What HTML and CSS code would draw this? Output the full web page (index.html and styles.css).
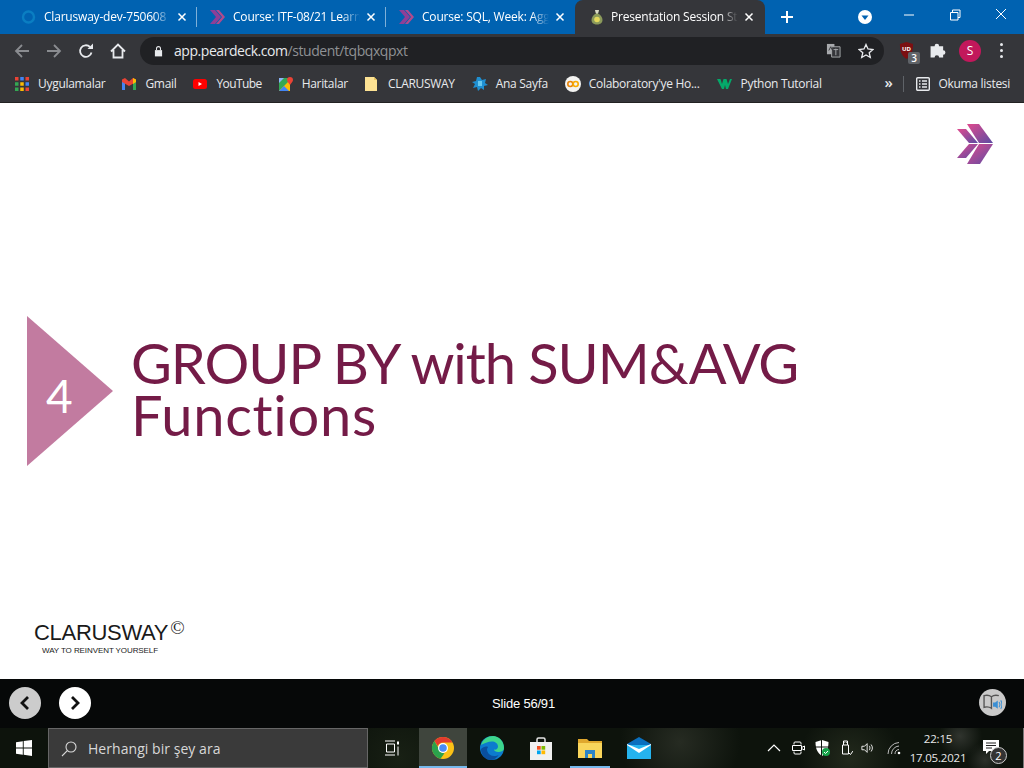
FILE: index.html
```html
<!DOCTYPE html>
<html lang="tr">
<head>
<meta charset="utf-8">
<title>Presentation Session Student</title>
<link rel="stylesheet" href="styles.css">
</head>
<body>
<div class="screen">
  <header class="tabstrip">
    <div class="tab">
      <svg class="fav" viewBox="0 0 16 16"><circle cx="7.500" cy="8" r="5.500" fill="none" stroke="#0a7ec2" stroke-width="2.400"/></svg>
      <span class="tab-title">Clarusway-dev-750608</span>
      <svg class="tab-x" viewBox="0 0 10 10"><path d="M1.500 1.500l7 7M8.500 1.500l-7 7"/></svg>
    </div>
    <i class="tab-sep"></i>
    <div class="tab">
      <svg class="fav" viewBox="0 0 16 16"><path d="M0 1h5l6 7-6 7H0l6-7z" fill="#8e3f97"/><path d="M6 1h3l6 7-6 7H6l6-7z" fill="#b04a8c"/></svg>
      <span class="tab-title">Course: ITF-08/21 Learn</span>
      <svg class="tab-x" viewBox="0 0 10 10"><path d="M1.500 1.500l7 7M8.500 1.500l-7 7"/></svg>
    </div>
    <i class="tab-sep"></i>
    <div class="tab">
      <svg class="fav" viewBox="0 0 16 16"><path d="M0 1h5l6 7-6 7H0l6-7z" fill="#8e3f97"/><path d="M6 1h3l6 7-6 7H6l6-7z" fill="#b04a8c"/></svg>
      <span class="tab-title">Course: SQL, Week: Agg</span>
      <svg class="tab-x" viewBox="0 0 10 10"><path d="M1.500 1.500l7 7M8.500 1.500l-7 7"/></svg>
    </div>
    <div class="tab tab-active">
      <svg class="fav" viewBox="0 0 16 16"><path d="M6 1h4L9 4.500c3 1.500 4.500 4 4.500 6.500 0 3-2.500 4.500-5.500 4.500S2.500 14 2.500 11C2.500 8.500 4 6 7 4.500z" fill="#8b9a5b"/><circle cx="8" cy="10.500" r="2.800" fill="#e3d95c"/><path d="M6 1h4L9 4.500H7z" fill="#d8d8c8"/></svg>
      <span class="tab-title">Presentation Session Stu</span>
      <svg class="tab-x" viewBox="0 0 10 10"><path d="M1.500 1.500l7 7M8.500 1.500l-7 7"/></svg>
    </div>
    <svg class="newtab" viewBox="0 0 12 12"><path d="M6 0v12M0 6h12"/></svg>
    <div class="strip-spacer"></div>
    <svg class="profile-drop" viewBox="0 0 14 14"><circle cx="7" cy="7" r="7" fill="#fff"/><path d="M3.500 5.500h7L7 10z" fill="#0062b1"/></svg>
    <div class="winctl">
      <svg viewBox="0 0 46 30"><path d="M18 15h10"/></svg>
      <svg viewBox="0 0 46 30"><path d="M18.500 12.500h7.500v7.500h-7.500zM20.500 12.500v-2.500h7.500v7.500h-2"/></svg>
      <svg viewBox="0 0 46 30"><path d="M18 9l10 10M28 9l-10 10"/></svg>
    </div>
  </header>

  <nav class="toolbar">
    <svg class="tool dim" viewBox="0 0 16 16"><path d="M15 8H2M8 2L2 8l6 6"/></svg>
    <svg class="tool dim" viewBox="0 0 16 16"><path d="M1 8h13M8 2l6 6-6 6"/></svg>
    <svg class="tool" viewBox="0 0 16 16"><path d="M13.500 9.500A5.800 5.800 0 1 1 12 4"/><path class="solid" d="M9.500 6H15V.5z"/></svg>
    <svg class="tool" viewBox="0 0 16 16"><path d="M1 8.500L8 1.500l7 7M3.500 7v7.500h9V7"/></svg>
    <div class="omnibox">
      <svg class="lock" viewBox="0 0 10 12"><path d="M1 5h8v7H1z" fill="#e8eaed"/><path d="M2.800 5V3.300a2.200 2.200 0 0 1 4.400 0V5" fill="none" stroke="#e8eaed" stroke-width="1.200"/></svg>
      <span class="url"><b>app.peardeck.com</b>/student/tqbqxqpxt</span>
      <div class="omni-spacer"></div>
      <svg class="translate" viewBox="0 0 16 16"><path d="M1 1h8v11H1z" fill="#a8aaad"/><path d="M6 4h9v11H6z" fill="#35363a" stroke="#a8aaad"/><path d="M3 8l2-4 2 4" stroke="#35363a" fill="none"/><path d="M8 7h5M10.500 6v7" stroke="#a8aaad"/></svg>
      <svg class="star" viewBox="0 0 16 16"><path d="M8 1.500l2 4.500 4.900.5-3.700 3.200 1.100 4.800L8 12l-4.300 2.500 1.100-4.800L1.100 6.500 6 6z"/></svg>
    </div>
    <div class="ublock">
      <svg viewBox="0 0 16 18"><path d="M8 0l7 2c0 8-2 13-7 16C3 15 1 10 1 2z" fill="#7b0f12"/></svg>
      <span class="ub-text">UD</span>
      <span class="ub-badge">3</span>
    </div>
    <svg class="puzzle" viewBox="0.500 2.500 14 13.500"><path d="M1 5h3.500a2 2 0 1 1 4 0H12v3.500a2 2 0 1 1 0 4V15H8.500a2 2 0 1 0-4 0H1z" fill="#e8eaed"/></svg>
    <span class="avatar">S</span>
    <span class="kebab"><i></i><i></i><i></i></span>
  </nav>

  <nav class="bookmarks">
    <span class="bm">
      <svg class="bm-ic" viewBox="0 0 12 12"><g><rect width="3" height="3" fill="#ea4335"/><rect x="4.500" width="3" height="3" fill="#4285f4"/><rect x="9" width="3" height="3" fill="#ea4335"/><rect y="4.500" width="3" height="3" fill="#34a853"/><rect x="4.500" y="4.500" width="3" height="3" fill="#fbbc04"/><rect x="9" y="4.500" width="3" height="3" fill="#4285f4"/><rect y="9" width="3" height="3" fill="#34a853"/><rect x="4.500" y="9" width="3" height="3" fill="#fbbc04"/><rect x="9" y="9" width="3" height="3" fill="#ea4335"/></g></svg>
      Uygulamalar</span>
    <span class="bm">
      <svg class="bm-ic" viewBox="0 0 14 12"><path d="M0 2v10h3V5z" fill="#4285f4"/><path d="M14 2v10h-3V5z" fill="#34a853"/><path d="M0 1.500L3 0l4 3.500L11 0l3 1.500V4L7 8 0 4z" fill="#ea4335"/><path d="M11 0l3 1.500V4l-3 2z" fill="#fbbc04"/></svg>
      Gmail</span>
    <span class="bm bm-tight">
      <svg class="bm-ic" viewBox="0 0 14 10"><rect width="14" height="10" rx="2.500" fill="#f00"/><path d="M5.500 3v4L9 5z" fill="#fff"/></svg>
      YouTube</span>
    <span class="bm">
      <svg class="bm-ic" viewBox="0 0 14 14"><path d="M0 1h11v13H0z" fill="#34a853"/><path d="M0 14L11 3v11z" fill="#fbbc04"/><path d="M0 14l5-5 5 5z" fill="#4285f4"/><path d="M0 1h5L0 6z" fill="#8ab4f8"/><path d="M11 0a3 3 0 0 1 3 3c0 2-2 3-3 5-1-2-3-3-3-5a3 3 0 0 1 3-3z" fill="#ea4335"/></svg>
      Haritalar</span>
    <span class="bm">
      <svg class="bm-ic" viewBox="0 0 14 14"><path d="M0 0h9l3 3v11H0z" fill="#fde293"/><path d="M9 0l3 3H9z" fill="#e8c55f"/></svg>
      CLARUSWAY</span>
    <span class="bm">
      <svg class="bm-ic bm-ic-wide" viewBox="0 0 16 14"><path d="M8 0l2 3 4-1-1 4 3 2-4 1 0 4-3-2-3 3-1-4-4 1 2-4L0 5l4-1 1-4z" fill="#1f8fd1"/><path d="M6 4h4v5H6z" fill="#67c7ee"/></svg>
      Ana Sayfa</span>
    <span class="bm">
      <svg class="bm-ic bm-ic-wide" viewBox="0 0 16 16"><circle cx="8" cy="8" r="8" fill="#f3f3f1"/><circle cx="5.300" cy="8" r="2.500" fill="none" stroke="#e8860c" stroke-width="1.600"/><circle cx="10.700" cy="8" r="2.500" fill="none" stroke="#f9ab00" stroke-width="1.600"/></svg>
      Colaboratory'ye Ho...</span>
    <span class="bm">
      <svg class="bm-ic bm-ic-wide" viewBox="0 0 16 12"><path d="M0 1h3.500L5 6l1.500-5h3L11 6l2-5h2l-4 10H9L8 7l-1 4H5z" fill="#04a96a"/></svg>
      Python Tutorial</span>
    <div class="bm-spacer"></div>
    <span class="chev">»</span>
    <i class="bm-sep"></i>
    <span class="bm bm-last">
      <svg class="bm-ic" viewBox="0 0 14 14"><rect x=".7" y=".7" width="12.600" height="12.600" rx="1" fill="none" stroke="#e8eaed" stroke-width="1.400"/><path d="M3 4h1.500M6 4h5M3 7h1.500M6 7h5M3 10h1.500M6 10h5" stroke="#e8eaed" stroke-width="1.300"/></svg>
      Okuma listesi</span>
  </nav>

  <main class="slide">
    <svg class="slide-logo" viewBox="0 0 36 40">
      <defs><linearGradient id="lg" x1="0" y1="0" x2="1" y2="1"><stop offset="0" stop-color="#df4a8e"/><stop offset="1" stop-color="#5c4ba3"/></linearGradient></defs>
      <path d="M0 5h9l12 14h-9z" fill="url(#lg)"/><path d="M12 20h9L9 34H0z" fill="url(#lg)"/>
      <path d="M10 0h12l14 19H22z" fill="url(#lg)"/><path d="M22 20h14L23 40H10z" fill="url(#lg)"/>
    </svg>
    <div class="section-marker"><span>4</span></div>
    <h1 class="slide-title"><span class="line-one">GROUP BY with SUM&amp;AVG</span><span class="line-two">Functions</span></h1>
    <div class="brand">
      <div class="brand-name">CLARUSWAY<sup>©</sup></div>
      <div class="brand-tag">WAY TO REINVENT YOURSELF</div>
    </div>
  </main>

  <footer class="deckbar">
    <button class="nav-btn nav-off"><svg viewBox="0 0 12 16"><path d="M9 2L3 8l6 6"/></svg></button>
    <button class="nav-btn"><svg viewBox="0 0 12 16"><path d="M3 2l6 6-6 6"/></svg></button>
    <span class="slide-count">Slide 56/91</span>
    <span class="reader">
      <svg viewBox="0 0 18 18"><path d="M1 2.500c3-.8 5-.5 7 1v11c-2-1.500-4-1.800-7-1zM15 2.500c-3-.8-5-.5-7 1v11" fill="none" stroke="#555" stroke-width="1.300"/><path d="M9.500 9h2l2.500-2v8l-2.500-2h-2z" fill="#3b8fd4"/><path d="M15.200 8.500c1 1.500 1 3.500 0 5M16.800 7c1.500 2 1.500 6 0 8" fill="none" stroke="#3b8fd4"/></svg>
    </span>
  </footer>

  <footer class="taskbar">
    <svg class="start" viewBox="0 0 16 16"><path d="M0 2.200l6.800-1v6.300H0zM7.700 1L16 0v7.500H7.700zM0 8.500h6.800v6.300l-6.800-1zM7.700 8.500H16V16l-8.300-1.200z"/></svg>
    <div class="search">
      <svg viewBox="0 0 16 16"><circle cx="10" cy="6" r="5" fill="none" stroke="#d8d8d8" stroke-width="1.100"/><path d="M6.300 9.700L1 15" stroke="#d8d8d8" stroke-width="1.100"/></svg>
      <span>Herhangi bir şey ara</span>
    </div>
    <div class="task-view">
      <svg viewBox="0 0 16 16"><path d="M1 1h10M1 15h10M2.500 4h8v8h-8z" stroke="#fff" fill="none"/><path d="M14 1.500v3" stroke="#fff" stroke-width="2"/><path d="M14 6.500v9" stroke="#fff"/></svg>
    </div>
    <div class="task-item task-active">
      <svg viewBox="0 0 24 24"><circle cx="12" cy="12" r="11" fill="#fbc116"/><path d="M12 1a11 11 0 0 1 9.500 5.500H12a5.500 5.500 0 0 0-5.200 3.700L3.400 5A11 11 0 0 1 12 1z" fill="#e33b2e"/><path d="M3.400 5l4.800 8.300A5.500 5.500 0 0 0 13.500 17.300L9.500 22.700A11 11 0 0 1 3.400 5z" fill="#2ba24c"/><circle cx="12" cy="12" r="5" fill="#fff"/><circle cx="12" cy="12" r="3.800" fill="#4a8bf5"/></svg>
    </div>
    <div class="task-item">
      <svg viewBox="0 0 24 24"><circle cx="12" cy="12" r="12" fill="#0c7bce"/><path d="M1 9C3 3 8 0 13 0c6 0 11 5 11 12 0 3-3 4-6 4-2 0-4-1-4-2.500 2 .5 4-.5 4-3 0-3-3-5-6-5-4 0-8 2-11 3.500z" fill="#3dd68c"/><path d="M7 13c0 4 3 7 7 7 2 0 4-.5 5-1.500-2 3.500-5 5.500-8 5.500C5 24 1 19 1 13c2-2 5-3 7-2z" fill="#0a4f9e"/></svg>
    </div>
    <div class="task-item">
      <svg viewBox="0 0 24 24"><path d="M8 6V3.500a1.500 1.500 0 0 1 1.500-1.500h5A1.500 1.500 0 0 1 16 3.500V6" fill="none" stroke="#e5e5e5" stroke-width="1.500"/><path d="M1 6h22v18H1z" fill="#f0f0f0"/><path d="M8 10h3.700v3.700H8z" fill="#f25022"/><path d="M12.500 10h3.700v3.700h-3.700z" fill="#7fba00"/><path d="M8 14.500h3.700v3.700H8z" fill="#00a4ef"/><path d="M12.500 14.500h3.700v3.700h-3.700z" fill="#ffb900"/></svg>
    </div>
    <div class="task-item task-running">
      <svg viewBox="0 0 24 20"><path d="M0 1h9l2 2h13v17H0z" fill="#e0a82e"/><path d="M0 5h24v15H0z" fill="#f9d65c"/><path d="M7 12h10v8h-3v-4h-4v4H7z" fill="#2d85c7"/></svg>
    </div>
    <div class="task-item">
      <svg viewBox="0 0 24 22"><path d="M12 0l12 7v15H0V7z" fill="#0a6fbe"/><path d="M0 8h24v14H0z" fill="#25b3ee"/><path d="M0 8l12 8 12-8v-1L12 12 0 7z" fill="#fff"/></svg>
    </div>
    <div class="task-spacer"></div>
    <div class="tray">
      <svg class="tr" viewBox="0 0 14 14"><path d="M1 10l6-6 6 6" fill="none" stroke="#fff" stroke-width="1.200"/></svg>
      <svg class="tr" viewBox="0 0 14 16"><path d="M3 4.500V3a1 1 0 0 1 1-1h5a1 1 0 0 1 1 1v1.500M3 11.500V13a1 1 0 0 0 1 1h5a1 1 0 0 0 1-1v-1.500M1.500 5.500h9v5h-9zM10.500 7.500l3-1.500v4l-3-1.500" fill="none" stroke="#fff"/></svg>
      <span class="shield">
        <svg class="tr" viewBox="0 0 14 16"><path d="M7 0l6.500 2c0 7-2 11-6.500 14C2.500 13 .5 9 .5 2z" fill="#fff"/><path d="M6.500 0v16M0 7h14" stroke="#101510"/></svg>
        <svg class="shield-ok" viewBox="0 0 8 8"><circle cx="4" cy="4" r="4" fill="#16a34a"/><path d="M2 4l1.500 1.500L6 3" fill="none" stroke="#fff"/></svg>
      </span>
      <svg class="tr" viewBox="0 0 14 16"><path d="M3.500 5h6v9h-6zM4.500 5V1h4v4M5.500 2.500h.7M7 2.500h.7M10 13l1.500 1.500L14 11" fill="none" stroke="#fff"/></svg>
      <svg class="tr tr-speaker" viewBox="0 0 16 14"><path d="M1 5h3l3-3v10L4 9H1zM9.500 4.500c1 1.500 1 3.500 0 5M11.500 3c2 2.500 2 5.500 0 8" fill="none" stroke="#fff"/></svg>
      <svg class="tr" viewBox="0 0 14 14"><circle cx="12" cy="12" r="1.300" fill="#fff"/><path d="M8 13a4.500 4.500 0 0 1 4-4.500M4.500 13a8 8 0 0 1 7.500-8M1 13A11.500 11.500 0 0 1 12 1.500" fill="none" stroke="#bbb"/></svg>
    </div>
    <div class="clock"><span>22:15</span><span>17.05.2021</span></div>
    <div class="notify">
      <svg viewBox="0 0 16 14"><path d="M0 0h16v11H6l-3 3v-3H0z" fill="#fff"/><path d="M3 3h10M3 5.500h10M3 8h6" stroke="#222"/></svg>
      <span>2</span>
    </div>
    <i class="show-desktop"></i>
  </footer>
</div>
</body>
</html>
```
FILE: styles.css
```css
* { box-sizing: border-box; }
html, body { margin: 0; height: 100%; overflow: hidden; }
body { font-family: "Open Sans", "Noto Sans", sans-serif; background: #fff; }
.screen { width: 1024px; height: 768px; display: flex; flex-direction: column; }
svg { display: block; flex: none; }

.tabstrip { height: 34px; flex: none; background: #0062b1; display: flex; align-items: flex-end; padding-left: 8px; }
.tab { width: 188px; height: 34px; display: flex; align-items: center; padding: 0 9px 0 13px; color: #fff; flex: none; }
.tab .fav { width: 16px; height: 16px; margin-right: 7px; }
.tab-title { flex: 1; min-width: 0; font-size: 12px; letter-spacing: -0.2px; white-space: nowrap; overflow: hidden; padding-bottom: 1px;
  -webkit-mask-image: linear-gradient(90deg, #000 86%, transparent 100%); mask-image: linear-gradient(90deg, #000 86%, transparent 100%); }
.tab-x { width: 10px; height: 10px; margin-left: 6px; fill: none; stroke: #fff; stroke-width: 1.500; }
.tab-sep { width: 1px; height: 20px; background: #7fb0d8; margin-bottom: 7px; flex: none; }
.tab + .tab-active { margin-left: 1px; }
.tab-active { background: #35363a; border-radius: 8px 8px 0 0; width: 190px; padding: 0 11px 0 14px; }
.tab-active .fav { margin-right: 6px; }
.newtab { width: 12px; height: 12px; margin: 0 0 11px 16px; fill: none; stroke: #fff; stroke-width: 2; }
.strip-spacer { flex: 1; }
.profile-drop { width: 14px; height: 14px; margin: 0 14px 10px 0; }
.winctl { display: flex; align-self: flex-start; }
.winctl svg { width: 46px; height: 30px; fill: none; stroke: #fff; stroke-width: 1; }

.toolbar { height: 33px; flex: none; background: #35363a; display: flex; align-items: center; padding: 0 13px 0 14px; }
.tool { width: 16px; height: 16px; margin-right: 16px; fill: none; stroke: #e8eaed; stroke-width: 1.800; }
.tool .solid { fill: #e8eaed; stroke: none; }
.tool.dim { stroke: #8a8c90; }
.toolbar .tool:nth-child(4) { margin-right: 14px; }
.omnibox { width: 744px; height: 28px; border-radius: 14px; background: #202124; display: flex; align-items: center; padding: 0 10px 0 14px; }
.lock { width: 9px; height: 12px; margin-right: 11px; }
.url { font-size: 14px; letter-spacing: -0.45px; color: #8f9194; white-space: nowrap; }
.url b { font-weight: 400; color: #e8eaed; }
.omni-spacer { flex: 1; }
.translate { width: 15px; height: 15px; margin-right: 17px; }
.star { width: 16px; height: 16px; fill: none; stroke: #e8eaed; stroke-width: 1.300; }
.ublock { position: relative; width: 16px; height: 18px; margin-left: 15px; }
.ublock svg { width: 15px; height: 17px; }
.ub-text { position: absolute; left: 3px; top: 3px; font-size: 6px; font-weight: 700; line-height: 8px; color: #fff; }
.ub-badge { position: absolute; left: 9px; top: 10px; width: 12px; height: 12px; border-radius: 2px; background: #5f6368; color: #fff; font-size: 10px; line-height: 12px; text-align: center; font-weight: 600; }
.puzzle { width: 16px; height: 16px; margin-left: 15px; }
.avatar { width: 22px; height: 22px; margin-left: 13px; border-radius: 50%; background: #c2185b; color: #fff; font-size: 12px; line-height: 22px; text-align: center; }
.kebab { display: flex; flex-direction: column; gap: 3px; margin-left: 19px; }
.kebab i { width: 3px; height: 3px; border-radius: 50%; background: #e8eaed; }

.bookmarks { height: 36px; flex: none; background: #35363a; border-bottom: 1px solid #222; display: flex; align-items: center; padding: 0 14px 2px 15px; color: #e8eaed; font-size: 12px; letter-spacing: -0.3px; }
.bm { display: flex; align-items: center; white-space: nowrap; margin-right: 17px; }
.bm-tight { letter-spacing: -0.6px; }
.bm-ic { width: 14px; height: 14px; margin-right: 9px; }
.bm-ic-wide { width: 16px; height: 16px; margin-right: 8px; }
.bm-spacer { flex: 1; }
.chev { font-size: 15px; line-height: 16px; margin: 0 11px 3px 0; font-weight: 600; }
.bm-sep { width: 1px; height: 16px; background: #5f6368; margin-right: 12px; }
.bm-last { margin-right: 0; }
.bm-last .bm-ic { margin-right: 8px; }

.slide { position: relative; flex: 1; background: #fff; overflow: hidden; }
.slide-logo { position: absolute; left: 957px; top: 21px; width: 36px; height: 40px; }
.section-marker { position: absolute; left: 27px; top: 213px; width: 86px; height: 150px; background: #c27ba0; clip-path: polygon(0 0, 100% 50%, 0 100%); }
.section-marker span { position: absolute; left: 19px; top: 52px; font-family: Lato, sans-serif; font-weight: 400; font-size: 46px; line-height: 56px; color: #fff; }
.slide-title { position: absolute; left: 131px; top: 234px; margin: 0; font-family: Lato, sans-serif; font-weight: 400; font-size: 56px; line-height: 52px; color: #741b47; white-space: nowrap; }
.line-one, .line-two { display: block; }
.line-one { letter-spacing: -1.050px; }
.line-two { letter-spacing: 0.700px; }
.brand { position: absolute; left: 34px; top: 516px; color: #1a1a1a; font-family: "Liberation Sans", sans-serif; }
.brand-name { font-size: 22px; line-height: 28px; letter-spacing: -0.3px; }
.brand-name sup { font-family: "Liberation Serif", serif; font-size: 19px; line-height: 0; vertical-align: 6px; margin-left: 2px; }
.brand-tag { font-size: 8px; line-height: 10px; margin-left: 8px; margin-top: -1px; letter-spacing: -0.08px; }

.deckbar { height: 49px; flex: none; background: #060808; display: flex; align-items: center; padding: 0 18px 2px 9px; position: relative; }
.nav-btn { width: 32px; height: 32px; padding: 0; border: 0; border-radius: 50%; background: #fff; display: flex; align-items: center; justify-content: center; margin-right: 18px; }
.nav-btn svg { width: 12px; height: 16px; fill: none; stroke: #111; stroke-width: 2.800; }
.nav-off { background: #ccc; }
.slide-count { position: absolute; left: 23px; right: 0; top: 17px; text-align: center; color: #fff; font-family: "Liberation Sans", sans-serif; font-size: 13px; line-height: 16px; letter-spacing: -0.2px; }
.reader { margin-left: auto; width: 27px; height: 27px; border-radius: 50%; background: #c9c9c9; display: flex; align-items: center; justify-content: center; }
.reader svg { width: 19px; height: 19px; }

.taskbar { height: 40px; flex: none; display: flex; align-items: stretch; color: #fff; position: relative;
  background:
    radial-gradient(circle at 960px 8px, #30342e 0, transparent 22px),
    radial-gradient(circle at 985px 32px, #2c302a 0, transparent 18px),
    radial-gradient(circle at 850px 30px, #22291c 0, transparent 50px),
    radial-gradient(circle at 680px 14px, #262b22 0, transparent 60px),
    radial-gradient(circle at 400px 30px, #182014 0, transparent 60px),
    #0d130c; }
.start { width: 16px; height: 16px; fill: #fff; margin: 12px 16px 0 16px; }
.search { width: 320px; background: #3a3a3a; border: 1px solid #666; border-bottom-width: 1px; display: flex; align-items: center; padding: 1px 0 0 12px; font-size: 14px; letter-spacing: 0.05px; color: #d8d8d8; }
.search svg { width: 16px; height: 16px; margin-right: 11px; }
.task-view { width: 51px; padding-right: 3px; display: flex; align-items: center; justify-content: center; flex: none; }
.task-view svg { width: 16px; height: 16px; }
.task-item { width: 48px; margin-right: 1px; display: flex; align-items: center; justify-content: center; flex: none; }
.task-item svg { width: 24px; height: 24px; }
.task-active { background: linear-gradient(#76b9ed, #76b9ed) bottom / 100% 2px no-repeat, #3f453d; }
.task-running { background: linear-gradient(#76b9ed, #76b9ed) bottom / 40px 2px no-repeat; }
.task-spacer { flex: 1; }
.tray { display: flex; align-items: center; gap: 10px; margin-right: 6px; }
.tr { width: 14px; height: 16px; }
.tr-speaker { margin-left: -2px; margin-right: 2px; }
.shield { position: relative; display: block; width: 14px; height: 16px; }
.shield-ok { position: absolute; left: 7px; top: 8px; width: 8px; height: 8px; }
.clock { width: 62px; display: flex; flex-direction: column; align-items: center; justify-content: center; font-size: 11.500px; line-height: 19px; letter-spacing: -0.2px; color: #e8e8e8; }
.notify { position: relative; width: 51px; margin-left: 4px; }
.notify svg { position: absolute; left: 10px; top: 12px; width: 16px; height: 14px; }
.notify span { position: absolute; left: 17px; top: 19px; width: 17px; height: 17px; border: 1px solid #ccc; border-radius: 50%; background: #333; font-size: 11px; line-height: 15px; text-align: center; }
.show-desktop { position: absolute; right: 0; top: 0; width: 1px; height: 40px; background: #777; }
```
